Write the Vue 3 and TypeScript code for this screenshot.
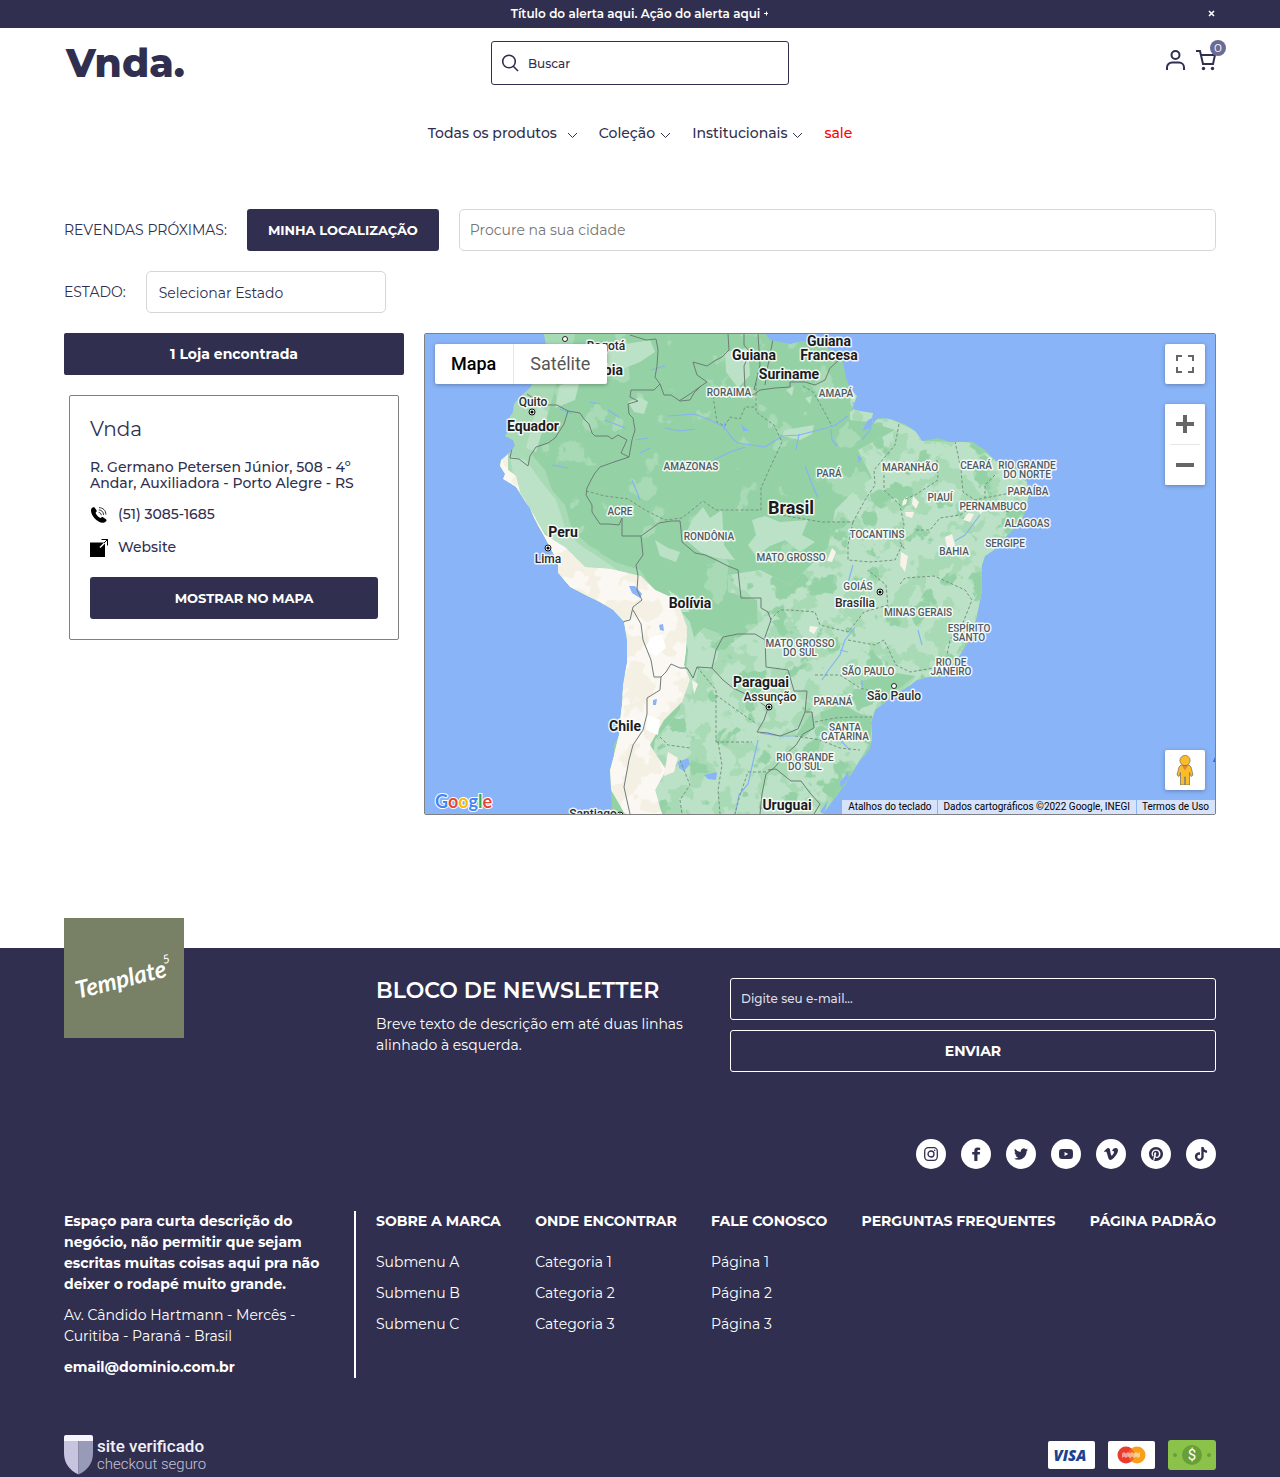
<script setup lang="ts">
import { ref } from 'vue'

interface NavItem { label: string; menu: boolean; wide?: boolean; sale?: boolean }
interface MapLabel { lines: string[]; x: number; y: number; kind: 'country' | 'big' | 'city' | 'state' }

const alertOpen = ref(true)
const search = ref('')
const city = ref('')
const email = ref('')
const state = ref('')
const mapType = ref<'mapa' | 'satelite'>('mapa')

const nav: NavItem[] = [
  { label: 'Todas os produtos', menu: true, wide: true },
  { label: 'Coleção', menu: true },
  { label: 'Institucionais', menu: true },
  { label: 'sale', menu: false, sale: true },
]

const labels: MapLabel[] = [
  { lines: ['Brasil'], x: 791, y: 514, kind: 'big' },
  { lines: ['Guiana'], x: 754, y: 360, kind: 'country' },
  { lines: ['Guiana', 'Francesa'], x: 829, y: 346, kind: 'country' },
  { lines: ['Suriname'], x: 789, y: 379, kind: 'country' },
  { lines: ['Colômbia'], x: 593, y: 375, kind: 'country' },
  { lines: ['Equador'], x: 533, y: 431, kind: 'country' },
  { lines: ['Peru'], x: 563, y: 537, kind: 'country' },
  { lines: ['Bolívia'], x: 690, y: 608, kind: 'country' },
  { lines: ['Paraguai'], x: 761, y: 687, kind: 'country' },
  { lines: ['Chile'], x: 625, y: 731, kind: 'country' },
  { lines: ['Uruguai'], x: 787, y: 810, kind: 'country' },
  { lines: ['Bogotá'], x: 606, y: 350, kind: 'city' },
  { lines: ['Quito'], x: 533, y: 406, kind: 'city' },
  { lines: ['Lima'], x: 548, y: 563, kind: 'city' },
  { lines: ['Brasília'], x: 855, y: 607, kind: 'city' },
  { lines: ['Assunção'], x: 770, y: 701, kind: 'city' },
  { lines: ['São Paulo'], x: 894, y: 700, kind: 'city' },
  { lines: ['Santiago'], x: 593, y: 818, kind: 'city' },
  { lines: ['RORAIMA'], x: 729, y: 396, kind: 'state' },
  { lines: ['AMAPÁ'], x: 836, y: 397, kind: 'state' },
  { lines: ['AMAZONAS'], x: 691, y: 470, kind: 'state' },
  { lines: ['PARÁ'], x: 829, y: 477, kind: 'state' },
  { lines: ['MARANHÃO'], x: 910, y: 471, kind: 'state' },
  { lines: ['CEARÁ'], x: 976, y: 469, kind: 'state' },
  { lines: ['RIO GRANDE', 'DO NORTE'], x: 1027, y: 469, kind: 'state' },
  { lines: ['PARAÍBA'], x: 1028, y: 495, kind: 'state' },
  { lines: ['PIAUÍ'], x: 940, y: 501, kind: 'state' },
  { lines: ['PERNAMBUCO'], x: 993, y: 510, kind: 'state' },
  { lines: ['ALAGOAS'], x: 1027, y: 527, kind: 'state' },
  { lines: ['SERGIPE'], x: 1005, y: 547, kind: 'state' },
  { lines: ['BAHIA'], x: 954, y: 555, kind: 'state' },
  { lines: ['ACRE'], x: 620, y: 515, kind: 'state' },
  { lines: ['RONDÔNIA'], x: 709, y: 540, kind: 'state' },
  { lines: ['TOCANTINS'], x: 877, y: 538, kind: 'state' },
  { lines: ['MATO GROSSO'], x: 791, y: 561, kind: 'state' },
  { lines: ['GOIÁS'], x: 858, y: 590, kind: 'state' },
  { lines: ['MINAS GERAIS'], x: 918, y: 616, kind: 'state' },
  { lines: ['ESPÍRITO', 'SANTO'], x: 969, y: 632, kind: 'state' },
  { lines: ['MATO GROSSO', 'DO SUL'], x: 800, y: 647, kind: 'state' },
  { lines: ['SÃO PAULO'], x: 868, y: 675, kind: 'state' },
  { lines: ['RIO DE', 'JANEIRO'], x: 951, y: 666, kind: 'state' },
  { lines: ['PARANÁ'], x: 833, y: 705, kind: 'state' },
  { lines: ['SANTA', 'CATARINA'], x: 845, y: 731, kind: 'state' },
  { lines: ['RIO GRANDE', 'DO SUL'], x: 805, y: 761, kind: 'state' },
]
const lineStep = { big: 18, country: 14, city: 12, state: 9 }

const capitals = [[532, 412], [548, 548], [880, 592], [769, 707], [620, 815]]
const cities = [[565, 339], [894, 686]]

const land =
  'M544 334L547 350 540 370 530 388 520 397 514 404 513 412 508 420 509 430 505 436 513 440 515 446 508 454 501 460 500 466 505 474 503 479 516 487 523 498 530 508 536 522 545 538 552 552 558 562 558 573 570 587 585 595 600 602 613 610 624 622 627 640 627 662 623 684 622 705 620 720 619 735 614 745 614 755 610 770 611 790 612 805 610 814H823L832 802 845 785 858 763 870 749 872 740 871 722 875 710 885 702 896 693 910 686 917 680 928 677 944 676 950 667 960 655 968 643 976 620 979 606 982 590 982 565 985 556 994 550 1003 540 1013 530 1022 520 1028 505 1029 494 1027 482 1022 471 1010 466 996 461 985 450 972 442 950 442 938 438 922 441 916 432 905 424 890 419 878 418 872 425 873 413 860 411 852 409 857 396 850 388 846 378 843 362 836 352 820 345 802 341 790 344 770 340 766 334Z'

const lightEast =
  'M850 388L857 396 853 409 873 413 873 420 888 418 917 431 922 441 950 442 972 442 996 461 1027 482 1029 495 1022 518 994 550 982 565 982 592 976 620 960 655 944 676 917 680 875 710 872 740 858 763 823 814H640L650 780 655 740 680 710 690 640 704 628 736 640 758 625 757 600 728 592 728 575 760 570 790 585 828 548 835 510 855 490 872 478 858 450 895 430 870 422 850 420Z'

const desert =
  'M508 454L501 460 500 466 505 474 503 479 516 487 523 498 536 522 545 538 558 562 558 573 570 587 613 610 624 622 627 662 623 684 619 735 614 755 610 770 611 790 625 814H662L655 790 666 770 650 745 664 720 682 702 690 680 684 665 686 650 687 627 677 600 655 590 641 576 610 569 585 567 566 548 545 535 532 512 520 492 516 476 508 470Z'

const borders = [
  'M527 394L536 400 548 405 557 405 568 411 564 424 555 438 548 443 536 447 530 456 528 466 519 459 510 458 512 448',
  'M568 411L580 413 584 419 589 424 592 433 595 436 608 436 612 439 618 435 627 440 621 453 629 457 632 440 635 430 633 418 629 414 628 404 638 401 630 397 631 390 654 390 660 384 655 377 657 366 658 350 656 339 646 340 630 335',
  'M660 384L664 395 671 395 680 401 690 400 694 393 701 386 707 382 697 375 693 362 707 366 716 360 722 357 729 350 728 334',
  'M701 386L690 394 679 401M744 334L744 345 750 352 744 366 745 390 753 395 760 390 775 388 790 387 790 382 805 382 815 385 825 380 830 368 838 361M758 334L760 365 754 390M774 334L768 365 765 385',
  'M629 457L614 462 600 467 595 473 591 480 587 488 586 495 592 505 592 512 600 524 609 524 619 525 622 518 622 536 641 536 659 523 671 521 680 521 681 530 682 542 695 553 705 555 716 560 728 566 738 570 741 598 761 598 761 608 768 612 771 620 765 637 766 667 788 670 794 691 807 691 805 712 798 729 788 733 780 736 768 733 757 732 764 720 768 708',
  'M641 536L643 555 636 565 638 576 637 590 642 600 633 607 630 620 622 622 612 621M633 610L641 624 643 640 651 660 654 677 661 677 666 672 671 664 680 668 687 668 693 678 697 667 712 668 716 650 723 637 738 634 755 634 765 640',
  'M712 668L723 680 733 688 754 698 768 708M661 677L660 690 647 698 647 714 643 730 633 745 629 760 624 787 630 814',
  'M805 712L812 712 814 728 803 734 796 745 785 755 775 767 766 774 762 794 760 814M768 770L776 769 791 781 801 781 810 793 820 804 814 814',
]
const stateLines = [
  'M586 491L605 496 628 499 645 510 665 520 682 518 692 510 703 501 716 510H761V488L769 470 782 442 774 425 756 412V382M713 396L717 422 725 426 730 417 740 419 745 407 755 407',
  'M803 386L813 392 818 400 825 413 832 426M899 424L895 445 874 470 875 485 865 500 853 522H822L780 515M884 470L884 490 900 505 904 525 900 542 905 550',
  'M853 522L848 545V560L870 562 895 560 902 545M916 530L930 530 940 518 960 515 975 505 990 508 1010 512M955 441L961 470 963 492 975 500 1000 495 1026 490M995 475L985 485 985 498M937 460L938 480 915 495 903 500',
  'M770 620L780 610 790 610 815 612 820 625 848 632 864 612 888 605 886 585 868 570M900 584L905 578 934 576 950 583 965 590 972 600 962 625 950 640 947 655M848 640L875 645 884 640 896 665 910 672 940 667',
  'M815 675L840 675 860 688 874 692 870 700M815 722L835 718 855 717 872 717M795 736L820 740 840 748 860 750M697 667L716 690 716 742M716 695L745 716 757 724M716 742H752M718 742L722 765 718 790 720 814M660 737L668 745 690 748M680 760L690 785 680 800 682 814M766 772H748L740 795 735 814',
]
const rivers = [
  'M668 416L695 414 710 420 724 427 732 438 738 443 765 447 782 436 799 435 815 431 834 426 848 416',
  'M831 429L832 440 837 446M873 415L870 430 862 440M799 434L796 450M725 422L724 430M745 447L730 452 714 460M805 466L812 484 818 498',
  'M560 409L572 414M590 402L600 404M608 410L620 418M605 420L625 428M635 440L648 438M665 428L680 431 695 429M651 370L665 366M552 465L568 468M632 480L640 500M690 470L700 465M640 453L650 448',
  'M822 680L830 668 840 655 845 640 855 627M760 733L780 736 795 736M955 541L965 535 980 515M735 814L739 795 748 784 758 740M918 630L922 645M853 565L846 590M840 650L848 652M840 740L850 750M862 680L862 690',
]

const stateOptions = ['RS', 'PR', 'SC']

const footerMenus = [
  { title: 'SOBRE A MARCA', items: ['Submenu A', 'Submenu B', 'Submenu C'] },
  { title: 'ONDE ENCONTRAR', items: ['Categoria 1', 'Categoria 2', 'Categoria 3'] },
  { title: 'FALE CONOSCO', items: ['Página 1', 'Página 2', 'Página 3'] },
  { title: 'PERGUNTAS FREQUENTES', items: [] },
  { title: 'PÁGINA PADRÃO', items: [] },
]

const socials = [
  { name: 'Facebook', d: 'M14.500 8.500V6.600c0-.9.6-1.300 1-1.300h3.600V1.200L14.500 1c-4 0-5.400 3-5.400 4.900v2.600H5.500v4.200h3.600V24h5.400V12.700h3.900l.6-4.200z' },
  { name: 'Twitter', d: 'M23.953 4.57a10 10 0 01-2.825.775 4.958 4.958 0 002.163-2.723c-.951.555-2.005.959-3.127 1.184a4.92 4.92 0 00-8.384 4.482C7.69 8.095 4.067 6.13 1.64 3.162a4.822 4.822 0 00-.666 2.475c0 1.71.87 3.213 2.188 4.096a4.904 4.904 0 01-2.228-.616v.06a4.923 4.923 0 003.946 4.827 4.996 4.996 0 01-2.212.085 4.936 4.936 0 004.604 3.417 9.867 9.867 0 01-6.102 2.105c-.39 0-.779-.023-1.17-.067a13.995 13.995 0 007.557 2.209c9.053 0 13.998-7.496 13.998-13.985 0-.21 0-.42-.015-.63A9.935 9.935 0 0024 4.59z' },
  { name: 'YouTube', d: 'M23.498 6.186a3.016 3.016 0 0 0-2.122-2.136C19.505 3.545 12 3.545 12 3.545s-7.505 0-9.377.505A3.017 3.017 0 0 0 .502 6.186C0 8.07 0 12 0 12s0 3.93.502 5.814a3.016 3.016 0 0 0 2.122 2.136c1.871.505 9.376.505 9.376.505s7.505 0 9.377-.505a3.015 3.015 0 0 0 2.122-2.136C24 15.93 24 12 24 12s0-3.93-.502-5.814zM9.545 15.568V8.432L15.818 12l-6.273 3.568z' },
  { name: 'Vimeo', d: 'M23.977 6.417c-.105 2.338-1.739 5.543-4.894 9.609-3.268 4.247-6.026 6.37-8.29 6.37-1.409 0-2.578-1.294-3.553-3.881l-1.918-7.114c-.719-2.584-1.488-3.878-2.312-3.878-.179 0-.806.378-1.881 1.132L0 7.198a315 315 0 003.501-3.128C5.08 2.702 6.266 1.985 7.055 1.911c1.867-.18 3.016 1.1 3.447 3.838.465 2.953.789 4.789.971 5.507.539 2.45 1.131 3.674 1.776 3.674.502 0 1.256-.796 2.265-2.385 1.004-1.589 1.54-2.797 1.612-3.628.144-1.371-.395-2.061-1.614-2.061-.574 0-1.167.121-1.777.391 1.186-3.868 3.434-5.757 6.762-5.637 2.473.06 3.628 1.664 3.48 4.807z' },
  { name: 'Pinterest', d: 'M12 0C5.373 0 0 5.372 0 12c0 5.084 3.163 9.426 7.627 11.174-.105-.949-.2-2.405.042-3.441.218-.937 1.407-5.965 1.407-5.965s-.359-.719-.359-1.782c0-1.668.967-2.914 2.171-2.914 1.023 0 1.518.769 1.518 1.69 0 1.029-.655 2.568-.994 3.995-.283 1.194.599 2.169 1.777 2.169 2.133 0 3.772-2.249 3.772-5.495 0-2.873-2.064-4.882-5.012-4.882-3.414 0-5.418 2.561-5.418 5.207 0 1.031.397 2.138.893 2.738.098.119.112.224.083.345l-.333 1.36c-.053.22-.174.267-.402.161-1.499-.698-2.436-2.889-2.436-4.649 0-3.785 2.75-7.262 7.929-7.262 4.163 0 7.398 2.967 7.398 6.931 0 4.136-2.607 7.464-6.227 7.464-1.216 0-2.359-.631-2.75-1.378l-.748 2.853c-.271 1.043-1.002 2.35-1.492 3.146C9.57 23.812 10.763 24 12 24c6.627 0 12-5.373 12-12 0-6.628-5.373-12-12-12z' },
  { name: 'TikTok', d: 'M12.525.02c1.31-.02 2.61-.01 3.91-.02.08 1.53.63 3.09 1.75 4.17 1.12 1.11 2.7 1.62 4.24 1.79v4.03c-1.44-.05-2.89-.35-4.2-.97-.57-.26-1.1-.59-1.62-.93-.01 2.92.01 5.84-.02 8.75-.08 1.4-.54 2.79-1.35 3.94-1.31 1.92-3.58 3.17-5.91 3.21-1.43.08-2.86-.31-4.08-1.03-2.02-1.19-3.44-3.37-3.65-5.71-.02-.5-.03-1-.01-1.49.18-1.9 1.12-3.72 2.58-4.96 1.66-1.44 3.98-2.13 6.15-1.72.02 1.48-.04 2.96-.04 4.44-.99-.32-2.15-.23-3.02.37-.63.41-1.11 1.04-1.36 1.75-.21.51-.15 1.07-.14 1.61.24 1.64 1.82 3.02 3.5 2.87 1.12-.01 2.19-.66 2.77-1.61.19-.33.4-.67.41-1.06.1-1.79.06-3.57.07-5.36.01-4.03-.01-8.05.02-12.07z' },
]
</script>

<template>
  <div class="page">
    <div v-if="alertOpen" class="alert">
      <a href="#">Título do alerta aqui. Ação do alerta aqui
        <svg width="5" height="5" viewBox="0 0 5 5" aria-hidden="true"><path d="M0 2.500h4M2.500 .500v4" stroke="#fff" /></svg>
      </a>
      <button type="button" class="alert-close" aria-label="Fechar alerta" @click="alertOpen = false">
        <svg width="7" height="7" viewBox="0 0 7 7"><path d="M1 1l5 5M6 1L1 6" stroke="#fff" stroke-width="1.600" /></svg>
      </button>
    </div>

    <header>
      <div class="header-row">
        <a href="#" class="logo">Vnda.</a>
        <label class="search">
          <svg width="18" height="18" viewBox="0 0 18 18" fill="none" stroke="#312f4f" stroke-width="1.600" aria-hidden="true">
            <circle cx="8" cy="7.500" r="6.300" /><path d="M12.300 12.300L17 17" />
          </svg>
          <input v-model="search" type="search" placeholder="Buscar" aria-label="Buscar" />
        </label>
        <div class="account">
          <a href="#" aria-label="Minha conta">
            <svg width="20" height="22" viewBox="0 0 20 22" fill="none" stroke="#312f4f" stroke-width="2">
              <circle cx="10.500" cy="6" r="4" /><path d="M2 21v-2.500a5 5 0 0 1 5-5h7a5 5 0 0 1 5 5V21" />
            </svg>
          </a>
          <a href="#" class="cart" aria-label="Carrinho">
            <svg width="21" height="22" viewBox="0 0 21 22" fill="none" stroke="#312f4f" stroke-width="2">
              <path d="M1 2h4l3 13h10L20 6H6" /><circle cx="8.500" cy="19.500" r="1.700" fill="#312f4f" stroke="none" /><circle cx="17.500" cy="19.500" r="1.700" fill="#312f4f" stroke="none" />
            </svg>
            <span class="badge">0</span>
          </a>
        </div>
      </div>
      <nav>
        <a v-for="n in nav" :key="n.label" href="#" :class="{ sale: n.sale, wide: n.wide }">
          {{ n.label }}
          <svg v-if="n.menu" width="11" height="7" viewBox="0 0 11 7" fill="none" stroke="#312f4f" aria-hidden="true"><path d="M1 1l4.500 4.500L10 1" /></svg>
        </a>
      </nav>
    </header>

    <main>
      <div class="row">
        <label for="city">REVENDAS PRÓXIMAS:</label>
        <button type="button" class="btn locate">MINHA LOCALIZAÇÃO</button>
        <input id="city" v-model="city" class="field" type="text" placeholder="Procure na sua cidade" />
      </div>
      <div class="row">
        <label for="state">ESTADO:</label>
        <select id="state" v-model="state" class="field">
          <option value="">Selecionar Estado</option>
          <option v-for="s in stateOptions" :key="s">{{ s }}</option>
        </select>
      </div>

      <div class="stores">
        <section class="list">
          <h2 class="count">1 Loja encontrada</h2>
          <article class="card">
            <h3>Vnda</h3>
            <p>R. Germano Petersen Júnior, 508 - 4º Andar, Auxiliadora - Porto Alegre - RS</p>
            <a href="#" class="contact">
              <svg width="18" height="18" viewBox="0 0 18 18" aria-hidden="true">
                <path d="M1.500 2.500C2.500 1 4 .800 4.600 1.600l1.900 2.700c.5.800.2 1.500-.8 2.300-.3 1.600 3.200 5.200 4.900 5.300.9-.9 1.700-1.200 2.400-.7l3 2c.8.600.7 1.400-.2 2.300C13 18.500 8 16 5 12.800 2 9.700-.1 5 1.500 2.500z" />
                <path d="M8.600 6.300c1.600.2 2.600 1.300 2.700 2.900M8.800 3.900c2.900.2 4.700 2 4.800 5M9 1.600c4.100.2 6.800 2.800 6.900 7" fill="none" stroke="#000" stroke-width=".8" />
              </svg>
              <span>(51) 3085-1685</span>
            </a>
            <a href="#" class="contact">
              <svg width="18" height="18" viewBox="0 0 18 18" aria-hidden="true">
                <path d="M0 3.500h15V18H0z" /><path d="M10 8.500L17 1.500" stroke="#fff" stroke-width="1.400" /><path d="M11.500.500h6v6M14 4l3.500-3.500" fill="none" stroke="#000" />
              </svg>
              <span>Website</span>
            </a>
            <button type="button" class="btn show">MOSTRAR NO MAPA</button>
          </article>
        </section>

        <section class="map" aria-label="Mapa das lojas">
          <svg class="canvas" viewBox="425 334 790 480" preserveAspectRatio="xMidYMid slice">
            <defs>
              <filter id="wood" x="0" y="0" width="1" height="1" color-interpolation-filters="sRGB">
                <feTurbulence type="fractalNoise" baseFrequency="0.035" numOctaves="4" seed="7" />
                <feColorMatrix values="0 0 0 0 0.580  0 0 0 0 0.824  0 0 0 0 0.647  24 0 0 0 -14.600" />
                <feComposite in2="SourceGraphic" operator="in" />
              </filter>
              <filter id="meadow" x="0" y="0" width="1" height="1" color-interpolation-filters="sRGB">
                <feTurbulence type="fractalNoise" baseFrequency="0.045" numOctaves="4" seed="21" />
                <feColorMatrix values="0 0 0 0 0.659  0 0 0 0 0.855  0 0 0 0 0.710  24 0 0 0 -13" />
                <feComposite in2="SourceGraphic" operator="in" />
              </filter>
              <filter id="clearing" x="0" y="0" width="1" height="1" color-interpolation-filters="sRGB">
                <feTurbulence type="fractalNoise" baseFrequency="0.03" numOctaves="4" seed="4" />
                <feColorMatrix values="0 0 0 0 0.660  0 0 0 0 0.855  0 0 0 0 0.715  24 0 0 0 -15.500" />
                <feComposite in2="SourceGraphic" operator="in" />
              </filter>
              <filter id="sand" x="0" y="0" width="1" height="1" color-interpolation-filters="sRGB">
                <feTurbulence type="fractalNoise" baseFrequency="0.04" numOctaves="3" seed="9" />
                <feColorMatrix values="0 0 0 0 0.984  0 0 0 0 0.973  0 0 0 0 0.953  24 0 0 0 -11" />
                <feComposite in2="SourceGraphic" operator="in" />
              </filter>
              <clipPath id="coast"><path :d="land" /></clipPath>
            </defs>
            <rect x="425" y="334" width="790" height="480" fill="#8ab4f8" />
            <path :d="land" fill="#94d2a5" />
            <g clip-path="url(#coast)">
              <path :d="land" filter="url(#clearing)" />
              <path d="M544 334L575 334 572 350 560 372 552 400 545 425 532 455 545 470 552 490 565 505 572 530 592 548 615 562 640 570 655 592 610 600 500 490 495 440 513 400Z" fill="#a8dab5" />
              <path d="M590 350L650 340 655 352 640 362 615 372 600 366ZM725 352L748 348 750 375 738 388 726 372ZM560 385L580 380 575 400 555 408ZM538 405L548 412 536 452 526 448 532 425ZM510 456L526 460 540 480 556 500 566 530 580 545 600 558 620 572 590 575 560 550 535 520 515 486ZM628 402L640 397 648 402 644 414 634 412ZM785 430L814 425 812 434 800 440 782 436ZM786 390L794 386 792 396ZM805 398L812 396 810 404Z" fill="#bbe2c6" />
              <path :d="lightEast" fill="#bbe2c6" />
              <path :d="lightEast" filter="url(#meadow)" />
              <path :d="lightEast" filter="url(#wood)" />
              <path d="M820 712L845 705 856 712 872 718 870 745 855 738 840 730 822 724ZM860 682L890 672 915 676 900 688 870 702ZM796 735L812 712 815 727 803 738Z" fill="#94d2a5" />
              <path d="M684 538L692 520 703 507 710 518 722 510 724 545 735 560 716 558 700 552ZM752 520L765 516 780 522 808 520 802 535 815 542 800 552 785 540 770 546 756 556 748 545 756 535Z" fill="#bbe2c6" />
              <path d="M655 540L668 548 680 552 676 562 660 556ZM680 610L690 622 700 660 694 690 686 680 688 650ZM668 590L678 596 690 612 680 612Z" fill="#bbe2c6" />
              <path :d="desert" fill="#f5f0e4" />
              <path :d="desert" filter="url(#sand)" />
              <path d="M650 638L662 634 666 648 656 656 645 650ZM648 715L660 720 658 735 646 730Z" fill="#fff" />
              <path d="M903 500L908 496 906 504 902 506ZM913 496L919 502 916 509 912 504ZM905 512L914 512 912 518 906 516ZM945 537L952 534 955 545 947 548ZM968 513L974 514 970 522 963 520ZM978 507L985 510 980 514ZM901 552L908 556 905 572 900 565ZM832 548L836 552 832 562 827 561ZM810 626L818 627 814 634 809 631ZM640 700L636 696 632 704ZM668 752L678 758 674 772 664 776ZM692 680L698 684 694 694Z" fill="#f8f3ea" />
              <path d="M629 586L635 586 642 594 640 598 632 593ZM659 625L663 624 664 631 660 630ZM840 782L848 772 849 778 841 788ZM678 762L688 758 690 764 684 771 679 768ZM704 775L717 772 716 780 708 779ZM853 354L857 356 857 364 853 360ZM741 424L749 431 743 431ZM857 455L862 458 859 463ZM852 402L862 405 856 409ZM820 812L828 800 824 814ZM653 700L657 699 656 705 653 705ZM868 420L874 417 870 428 862 431Z" fill="#8ab4f8" />
              <path v-for="r in rivers" :key="r" :d="r" fill="none" stroke="#86b3f2" stroke-width="1.200" stroke-linejoin="round" />
              <path v-for="s in stateLines" :key="s" :d="s" fill="none" stroke="#769382" stroke-dasharray="3 2" stroke-linejoin="round" />
              <path v-for="b in borders" :key="b" :d="b" fill="none" stroke="#6d7d76" stroke-width="1" stroke-linejoin="round" />
            </g>
            <path d="M1215 757v5h-2z" fill="#2965cc" />
            <g v-for="c in capitals" :key="c.join()">
              <circle :cx="c[0]" :cy="c[1]" r="3" fill="#fff" stroke="#111" /><circle :cx="c[0]" :cy="c[1]" r="1.600" />
            </g>
            <circle v-for="c in cities" :key="c.join()" :cx="c[0]" :cy="c[1]" r="2.500" fill="#fff" stroke="#222" />
            <text v-for="l in labels" :key="l.lines.join() + l.y" :class="l.kind" text-anchor="middle">
              <tspan v-for="(t, i) in l.lines" :key="t" :x="l.x" :y="l.y + i * lineStep[l.kind]">{{ t }}</tspan>
            </text>
          </svg>
          <div class="types">
            <button type="button" :class="{ on: mapType === 'mapa' }" @click="mapType = 'mapa'">Mapa</button>
            <button type="button" :class="{ on: mapType === 'satelite' }" @click="mapType = 'satelite'">Satélite</button>
          </div>
          <div class="controls">
            <button type="button" aria-label="Tela cheia">
              <svg width="18" height="18" viewBox="0 0 18 18" fill="none" stroke="#666" stroke-width="2"><path d="M1 6V1h5M12 1h5v5M17 12v5h-5M6 17H1v-5" /></svg>
            </button>
            <div class="zoom">
              <button type="button" aria-label="Aumentar zoom"><svg width="18" height="18" viewBox="0 0 18 18"><path d="M7 0h4v7h7v4h-7v7H7v-7H0V7h7z" fill="#666" /></svg></button>
              <hr />
              <button type="button" aria-label="Diminuir zoom"><svg width="18" height="18" viewBox="0 0 18 18"><path d="M0 7h18v4H0z" fill="#666" /></svg></button>
            </div>
          </div>
          <button type="button" class="pegman" aria-label="Street View">
            <svg width="18" height="30" viewBox="0 0 18 30" stroke="#6c6a5c" stroke-width=".7">
              <path d="M5 10h8l2 2 2 8-2 1.500-1.500-4V30h-4V22h-1v8h-4V17.500L3 21.500 1 20l2-8z" fill="#fbbc2c" />
              <path d="M6 10.500h6l-3 5z" fill="#e58432" stroke="none" /><circle cx="9" cy="5.500" r="5.100" fill="#fbbc2c" />
            </svg>
          </button>
          <a href="#" class="google" aria-label="Google"><span class="b">G</span><span class="r">o</span><span class="y">o</span><span class="b">g</span><span class="g">l</span><span class="r">e</span></a>
          <div class="legal">
            <button type="button">Atalhos do teclado</button>
            <span>Dados cartográficos ©2022 Google, INEGI</span>
            <a href="#">Termos de Uso</a>
          </div>
        </section>
      </div>
    </main>

    <footer>
      <div class="newsletter">
        <a href="#" class="brand" aria-label="Template 5">
          <svg width="120" height="120" viewBox="0 0 120 120">
            <g transform="rotate(-14 60 60)" fill="#fff"><text x="10" y="69" class="script">Template</text><text x="102" y="56" class="sup">5</text></g>
          </svg>
        </a>
        <div class="pitch">
          <h2>BLOCO DE NEWSLETTER</h2>
          <p>Breve texto de descrição em até duas linhas alinhado à esquerda.</p>
        </div>
        <form @submit.prevent>
          <input v-model="email" type="email" placeholder="Digite seu e-mail..." aria-label="Digite seu e-mail" />
          <button type="submit">ENVIAR</button>
        </form>
      </div>

      <div class="socials">
        <a href="#" aria-label="Instagram">
          <svg width="14" height="14" viewBox="0 0 14 14" fill="none" stroke="#312f4f" stroke-width="1.300"><rect x=".7" y=".7" width="12.600" height="12.600" rx="3.500" /><circle cx="7" cy="7" r="3" /><circle cx="10.700" cy="3.300" r=".8" fill="#312f4f" stroke="none" /></svg>
        </a>
        <a v-for="s in socials" :key="s.name" href="#" :aria-label="s.name">
          <svg width="14" height="14" viewBox="0 0 24 24"><path :d="s.d" fill="#312f4f" /></svg>
        </a>
      </div>

      <div class="links">
        <div class="about">
          <strong>Espaço para curta descrição do negócio, não permitir que sejam escritas muitas coisas aqui pra não deixer o rodapé muito grande.</strong>
          <address>Av. Cândido Hartmann - Mercês - Curitiba - Paraná - Brasil</address>
          <a href="#"><strong>email@dominio.com.br</strong></a>
        </div>
        <div class="menus">
          <div v-for="m in footerMenus" :key="m.title" class="menu">
            <h3>{{ m.title }}</h3>
            <a v-for="i in m.items" :key="i" href="#">{{ i }}</a>
          </div>
        </div>
      </div>

      <div class="bottom">
        <div class="verified">
          <svg width="29" height="40" viewBox="0 0 29 40" aria-hidden="true">
            <path d="M0 5h14.500v34.500C5 35 0 28 0 18z" fill="#c6c4df" /><path d="M14.500 5H29v13c0 10-5 17-14.500 21.500z" fill="#989bb8" /><path d="M2 0h25q2 0 2 2v4H0V2q0-2 2-2z" fill="#f6f4fc" />
          </svg>
          <div><b>site verificado</b><span>checkout seguro</span></div>
        </div>
        <div class="payments">
          <svg width="47" height="28" viewBox="0 0 47 28" role="img" aria-label="Visa"><rect width="47" height="28" rx="2" fill="#fff" /><text x="22" y="20" text-anchor="middle" class="visa">VISA</text></svg>
          <svg width="47" height="28" viewBox="0 0 47 28" role="img" aria-label="Mastercard"><rect width="47" height="28" rx="2" fill="#fff" /><circle cx="18" cy="14" r="8.500" fill="#eb3b2f" /><circle cx="29" cy="14" r="8.500" fill="#f79f1a" /><path d="M23.500 7.500a8.500 8.500 0 0 1 0 13 8.500 8.500 0 0 1 0-13z" fill="#f26322" /><path d="M14 12.500l2-1.500 2 1.500 2-1.500 2 1.500 2-1.500 2 1.500 2-1.500 2 1.500 2-1.500v4.500l-2 1.500-2-1.500-2 1.500-2-1.500-2 1.500-2-1.500-2 1.500-2-1.500-2 1.500z" fill="#fff" opacity=".5" /></svg>
          <svg width="48" height="30" viewBox="0 0 48 30" role="img" aria-label="Dinheiro"><rect width="48" height="30" rx="3" fill="#8bc34a" /><circle cx="24" cy="15" r="10" fill="#689f38" /><circle cx="7" cy="15" r="2" fill="#689f38" /><circle cx="41" cy="15" r="2" fill="#689f38" /><text x="24" y="20" text-anchor="middle" class="dollar">$</text></svg>
        </div>
      </div>
    </footer>
  </div>
</template>

<style>
body { margin: 0; background: #fff; }
</style>

<style scoped>
.page { --ink: #312f4f; font: 400 14px/21px "Montserrat", "Inter", sans-serif; color: var(--ink); }
.page *, .page *::before { box-sizing: border-box; }
a { color: inherit; text-decoration: none; }
h2, h3, p { margin: 0; }
button, input, select { font: inherit; color: inherit; margin: 0; }
button { border: 0; padding: 0; cursor: pointer; }
svg { display: block; flex: none; }

.alert { display: flex; align-items: center; justify-content: center; position: relative; height: 28px; padding-bottom: 2px; background: var(--ink); color: #fff; font-size: 12px; font-weight: 600; }
.alert a { display: flex; align-items: center; gap: 4px; }
.alert-close { position: absolute; right: 5%; background: none; padding: 1px; }

.header-row { display: grid; grid-template-columns: 1fr 298px 1fr; align-items: start; padding: 13px 5% 0; }
.logo { font-size: 39px; line-height: 44px; font-weight: 800; padding-left: 2px; }
.search { display: flex; align-items: center; gap: 9px; height: 44px; padding: 0 9px; border: 1px solid var(--ink); border-radius: 3px; }
.search input { flex: 1; min-width: 0; border: 0; outline: 0; padding: 0; background: none; font-size: 12px; font-weight: 500; }
.search input::placeholder { color: var(--ink); opacity: 1; }
.account { display: flex; justify-content: flex-end; gap: 10px; padding-top: 8px; }
.cart { position: relative; }
.badge { position: absolute; right: -10px; top: -9px; width: 16px; height: 16px; border-radius: 50%; background: #6b6c93; color: #fff; font-size: 12px; line-height: 16px; text-align: center; }
nav { display: flex; justify-content: center; gap: 21px; margin-top: 38px; font-weight: 500; }
nav a { display: flex; align-items: center; gap: 5px; }
nav a.wide { gap: 10px; }
nav svg { margin-top: 4px; }
.sale { color: #f00; }

main { padding: 65px 5% 133px; }
.row { display: flex; align-items: center; gap: 20px; margin-bottom: 20px; }
.btn { height: 42px; border-radius: 3px; background: var(--ink); color: #fff; font-size: 13px; font-weight: 700; }
.locate { padding: 0 21px; }
.field { height: 42px; border: 1px solid #d6d6d8; border-radius: 5px; background: #fff; padding: 0 10px; outline: 0; }
input.field { flex: 1; min-width: 0; }
input.field::placeholder { color: #757575; opacity: 1; }
select.field { width: 240px; padding: 2px 12px 0; appearance: none; }

.stores { display: grid; grid-template-columns: 340px 1fr; gap: 20px; align-items: start; }
.count { height: 42px; border-radius: 2px; background: var(--ink); color: #fff; font-size: 14px; line-height: 42px; font-weight: 700; text-align: center; }
.card { display: flex; flex-direction: column; margin: 20px 5px 0; padding: 20px; border: 1px solid #808080; border-radius: 2px; font-weight: 500; }
.card h3 { font-size: 20px; line-height: 26px; font-weight: 400; margin-bottom: 17px; }
.card p { line-height: 16px; margin-bottom: 15px; }
.contact { display: flex; align-items: center; gap: 10px; line-height: 16px; margin-bottom: 15px; }
.contact span { padding-bottom: 2px; }
.show { margin-top: 5px; padding-left: 20px; }

.map { position: relative; height: 482px; border: 1px solid #808080; border-radius: 2px; overflow: hidden; font-family: Roboto, sans-serif; }
.canvas { width: 100%; height: 100%; }
.canvas text { paint-order: stroke; stroke: #fff; stroke-opacity: .85; stroke-width: 3px; stroke-linejoin: round; font-weight: 500; fill: #1b1b1d; }
.canvas .big { font-size: 18px; font-weight: 700; }
.canvas .country { font-size: 14px; font-weight: 700; }
.canvas .city { font-size: 12px; fill: #2b2d30; }
.canvas .state { font-size: 10px; fill: #4f5b62; }
.map button { background: #fff; }
.types { position: absolute; left: 10px; top: 10px; display: flex; border-radius: 2px; box-shadow: 0 1px 4px rgba(0, 0, 0, .3); overflow: hidden; }
.types button { height: 40px; padding: 0 17px 2px 16px; font-size: 18px; font-weight: 400; color: #565656; }
.types button + button { border-left: 1px solid #e6e6e6; }
.types .on { font-weight: 500; color: #000; }
.controls { position: absolute; right: 10px; top: 10px; display: grid; gap: 20px; }
.controls button, .pegman { display: grid; place-items: center; width: 40px; height: 40px; border-radius: 2px; }
.controls > button, .zoom, .pegman { box-shadow: 0 1px 4px rgba(0, 0, 0, .3); }
.zoom { background: #fff; border-radius: 2px; }
.zoom hr { height: 1px; margin: 0 5px; border: 0; background: #e6e6e6; }
.pegman { position: absolute; right: 10px; bottom: 24px; }
.google { position: absolute; left: 10px; bottom: 2px; font: 700 18px/22px "Lato", sans-serif; -webkit-text-stroke: 2px #fff; paint-order: stroke fill; }
.google .b { color: #4285f4; }
.google .r { color: #ea4335; }
.google .y { color: #fbbc05; }
.google .g { color: #34a853; }
.legal { position: absolute; right: 0; bottom: 0; display: flex; gap: 1px; font-size: 10px; line-height: 14px; color: #000; }
.legal > * { padding: 0 6px 0 5px; background: #d6e3fb; }
.map .legal button { padding: 0 6px; background: #d6e3fb; }

footer { background: var(--ink); color: #fff; padding: 30px 5% 2px; }
.newsletter { display: grid; grid-template-columns: 312px 1fr 486px; align-items: start; }
.brand { width: 120px; height: 120px; margin: -60px 0 0; background: #788065; }
.script { font: italic 700 24px "Lato", sans-serif; }
.sup { font: italic 400 12px "Lato", sans-serif; }
.pitch h2 { font-size: 22px; line-height: 26px; font-weight: 600; margin-bottom: 10px; }
.pitch p { max-width: 320px; }
form { display: grid; gap: 10px; }
form > * { height: 42px; border: 1px solid #fff; border-radius: 3px; background: none; }
form input { padding: 0 10px 2px; font-size: 12px; font-weight: 500; outline: 0; }
form input::placeholder { color: #dddde4; opacity: 1; }
form button { border: 1px solid #fff; font-weight: 700; }
.socials { display: flex; justify-content: flex-end; gap: 15px; margin-top: 67px; }
.socials a { display: grid; place-items: center; width: 30px; height: 30px; border-radius: 50%; background: #fff; }
.links { display: flex; gap: 20px; margin-top: 42px; }
.about { display: flex; flex-direction: column; gap: 10px; width: 292px; flex: none; padding-right: 30px; border-right: 2px solid #fff; }
.about strong { font-weight: 700; }
.about address { font-style: normal; }
.menus { flex: 1; display: flex; justify-content: space-between; }
.menu { display: flex; flex-direction: column; gap: 10px; }
.menu h3 { font-size: 14px; line-height: 21px; font-weight: 700; margin-bottom: 10px; }
.bottom { display: flex; justify-content: space-between; align-items: center; margin-top: 57px; }
.verified { display: flex; gap: 4px; font: 300 15px/18px Roboto, sans-serif; color: #c4c3d6; }
.verified div { display: grid; align-content: center; }
.verified b { font-size: 17px; font-weight: 500; color: #f1f0f8; }
.payments { display: flex; align-items: center; gap: 13px; }
.visa { font: italic 800 15px "Open Sans", sans-serif; fill: #20418f; }
.dollar { font: 400 15px Roboto, sans-serif; fill: #fff; }
</style>
